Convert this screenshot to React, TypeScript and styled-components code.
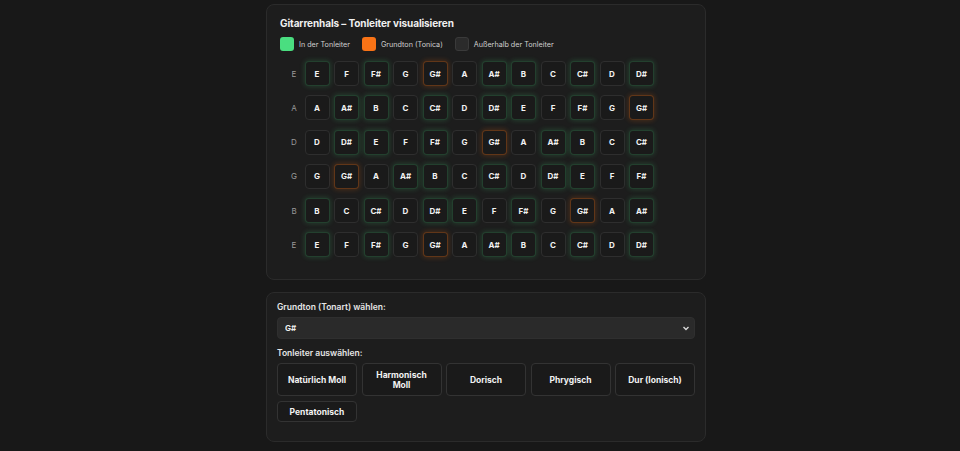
import styled, { createGlobalStyle, css } from "styled-components";

const NOTES = ["C", "C#", "D", "D#", "E", "F", "F#", "G", "G#", "A", "A#", "B"];
const STRINGS = ["E", "A", "D", "G", "B", "E"];
const ROOT = "G#";
const SCALE = ["G#", "A#", "B", "C#", "D#", "E", "F#"];
const SCALES = ["Natürlich Moll", "Harmonisch Moll", "Dorisch", "Phrygisch", "Dur (Ionisch)", "Pentatonisch"];

type Kind = "root" | "scale" | "out";

const noteAt = (open: string, fret: number) =>
  NOTES[(NOTES.indexOf(open) + fret) % 12];

const kindOf = (note: string): Kind =>
  note === ROOT ? "root" : SCALE.includes(note) ? "scale" : "out";

const App = () => {
  return (
    <>
      <GlobalStyle />
      <Page>
        <Column>
          <Card>
            <Title>Gitarrenhals – Tonleiter visualisieren</Title>
            <Legend>
              <LegendItem>
                <Swatch kind="scale" />
                In der Tonleiter
              </LegendItem>
              <LegendItem>
                <Swatch kind="root" />
                Grundton (Tonica)
              </LegendItem>
              <LegendItem>
                <Swatch kind="out" />
                Außerhalb der Tonleiter
              </LegendItem>
            </Legend>
            <Fretboard>
              {STRINGS.map((open, s) => (
                <StringRow key={s}>
                  <StringLabel>{open}</StringLabel>
                  {Array.from({ length: 12 }).map((_, f) => {
                    const note = noteAt(open, f);
                    return (
                      <Cell key={f} kind={kindOf(note)}>
                        {note}
                      </Cell>
                    );
                  })}
                </StringRow>
              ))}
            </Fretboard>
          </Card>

          <Card>
            <FieldLabel>Grundton (Tonart) wählen:</FieldLabel>
            <SelectWrap>
              <Select defaultValue="G#">
                {NOTES.map((n) => (
                  <option key={n} value={n}>
                    {n}
                  </option>
                ))}
              </Select>
              <Chevron viewBox="0 0 10 10">
                <path d="M2.5 4 L5 6.5 L7.5 4" />
              </Chevron>
            </SelectWrap>
            <FieldLabel>Tonleiter auswählen:</FieldLabel>
            <ScaleGrid>
              {SCALES.map((s) => (
                <ScaleButton key={s} compact={s === "Pentatonisch"}>
                  {s}
                </ScaleButton>
              ))}
            </ScaleGrid>
          </Card>
        </Column>
      </Page>
    </>
  );
};

const GlobalStyle = createGlobalStyle`
  html, body {
    margin: 0;
    background: #181818;
    font-family: Inter, "Noto Sans", sans-serif;
    color: #ececec;
  }
`;

const Page = styled.div`
  display: flex;
  justify-content: center;
  padding: 4px 0 0 12px;
`;

const Column = styled.div`
  width: 440px;
  display: flex;
  flex-direction: column;
  gap: 12px;
`;

const Card = styled.section`
  background: #1d1d1d;
  border: 1px solid #2b2b2b;
  border-radius: 8px;
  padding: 9px 10px 19px 10px;

  &:first-child {
    padding: 10px 13px 22px 13px;
  }
`;

const Title = styled.h2`
  margin: 0;
  font-size: 10px;
  font-weight: 700;
  line-height: 16px;
  letter-spacing: -0.1px;
  color: #f0f0f0;
`;

const Legend = styled.div`
  display: flex;
  align-items: center;
  gap: 12px;
  margin-top: 6px;
`;

const LegendItem = styled.div`
  display: flex;
  align-items: center;
  gap: 5px;
  font-size: 7.2px;
  color: #cfcfcf;
`;

const swatchColors: Record<Kind, string> = {
  scale: "#4ade80",
  root: "#f97316",
  out: "#2b2b2b",
};

const Swatch = styled.span<{ kind: Kind }>`
  width: 14px;
  height: 14px;
  border-radius: 3px;
  background: ${({ kind }) => swatchColors[kind]};
  border: 1px solid ${({ kind }) => (kind === "out" ? "#3a3a3a" : "transparent")};
  box-sizing: border-box;
`;

const Fretboard = styled.div`
  display: flex;
  flex-direction: column;
  gap: 9.3px;
  margin: 10px 0 0 8px;
`;

const StringRow = styled.div`
  display: flex;
  align-items: center;
  gap: 4.5px;
`;

const StringLabel = styled.span`
  width: 12px;
  text-align: center;
  font-size: 8px;
  color: #9a9a9a;
`;

const cellKind = {
  scale: css`
    border-color: rgba(74, 222, 128, 0.2);
    box-shadow: 0 0 5px 1px rgba(74, 222, 128, 0.16);
  `,
  root: css`
    border-color: rgba(249, 115, 22, 0.32);
    box-shadow: 0 0 5px 1px rgba(249, 115, 22, 0.2);
  `,
  out: css`
    border-color: #2e2e2e;
  `,
};

const Cell = styled.div<{ kind: Kind }>`
  width: 25px;
  height: 25px;
  box-sizing: border-box;
  display: flex;
  align-items: center;
  justify-content: center;
  border: 1px solid;
  border-radius: 4px;
  background: #1a1a1a;
  font-size: 8px;
  font-weight: 700;
  color: #f2f2f2;
  ${({ kind }) => cellKind[kind]}
`;

const FieldLabel = styled.div`
  font-size: 8.5px;
  font-weight: 600;
  color: #e6e6e6;
  line-height: 10px;
  margin: 0 0 5px 0;
`;

const SelectWrap = styled.div`
  position: relative;
  margin-bottom: 9px;
`;

const Select = styled.select`
  display: block;
  width: 100%;
  height: 22px;
  padding: 0 7px;
  appearance: none;
  background: #2a2a2a;
  color: #f0f0f0;
  border: 1px solid #2f2f2f;
  border-radius: 4px;
  font-family: inherit;
  font-size: 8px;
  font-weight: 700;
  outline: none;
`;

const Chevron = styled.svg`
  position: absolute;
  right: 4px;
  top: 6px;
  width: 10px;
  height: 10px;
  fill: none;
  stroke: #d8d8d8;
  stroke-width: 1.4;
  pointer-events: none;
`;

const ScaleGrid = styled.div`
  display: grid;
  grid-template-columns: repeat(5, 1fr);
  gap: 5px 4.5px;
`;

const ScaleButton = styled.button<{ compact?: boolean }>`
  height: ${({ compact }) => (compact ? "21px" : "33px")};
  padding: 0 6px;
  background: #1a1a1a;
  border: 1px solid #333;
  border-radius: 4px;
  color: #f2f2f2;
  font-family: inherit;
  font-size: 8.5px;
  font-weight: 700;
  line-height: 10px;
  cursor: pointer;
`;

export default App;
